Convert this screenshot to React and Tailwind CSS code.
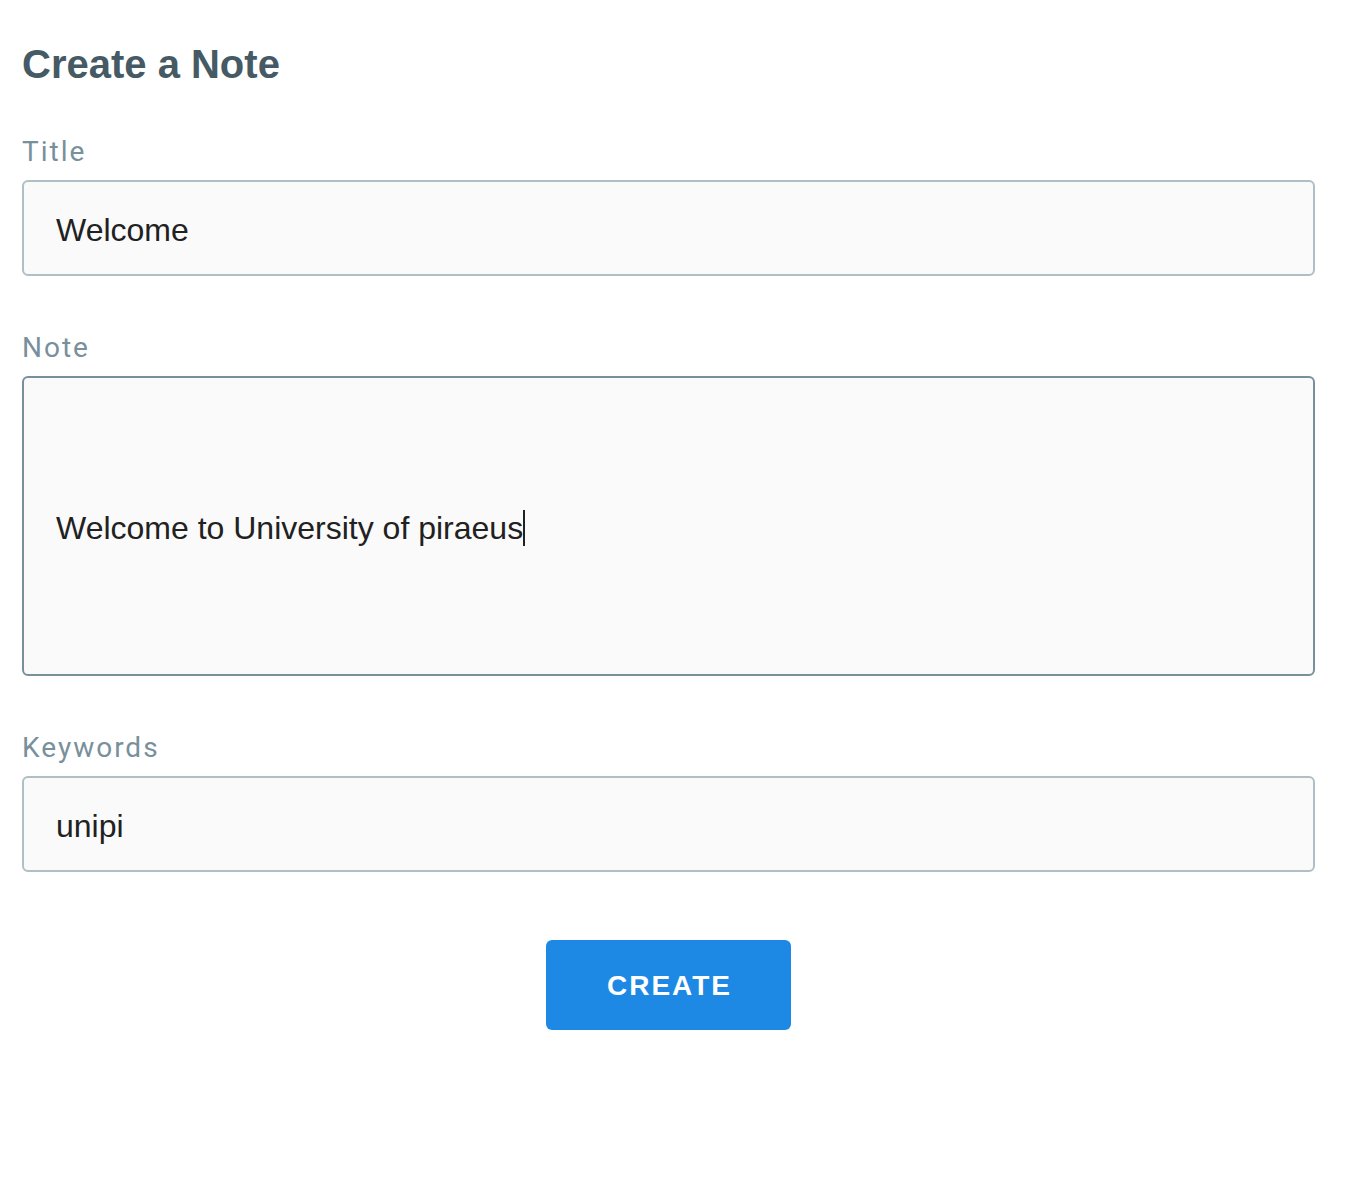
import React from 'react';

const labelCls =
  "block text-[28px] leading-none tracking-[2px] text-[#78909c] font-['Roboto',sans-serif] mb-[14px]";
const fieldCls =
  "block w-full h-[96px] px-[32px] pt-[4px] rounded-[6px] border-2 border-[#b0bec5] bg-[#fafafa] text-[32px] text-[#212121] font-['Liberation_Sans',Arial,sans-serif] outline-none";

export default function App() {
  return (
    <div className="min-h-screen bg-white px-[22px] pt-[44px] font-['Liberation_Sans',Arial,sans-serif]">
      <div className="w-[1293px]">
        <h1 className="text-[40px] leading-none font-bold text-[#455a64]">Create a Note</h1>

        <form className="mt-[54px]" onSubmit={(e) => e.preventDefault()}>
          <label className={labelCls}>Title</label>
          <input className={fieldCls} value="Welcome" readOnly />

          <label className={labelCls + " mt-[58px]"}>Note</label>
          <div className="flex items-center w-full h-[300px] px-[32px] pt-[4px] rounded-[6px] border-2 border-[#78909c] bg-[#fafafa] text-[32px] text-[#212121]">
            <span>Welcome to University of piraeus</span>
            <span className="inline-block w-[2px] h-[36px] bg-[#212121]" />
          </div>

          <label className={labelCls + " mt-[58px]"}>Keywords</label>
          <input className={fieldCls} value="unipi" readOnly />

          <div className="flex justify-center mt-[68px]">
            <button
              type="submit"
              className="w-[245px] h-[90px] rounded-[6px] bg-[#1e88e5] text-white text-[28px] font-bold tracking-[2px] uppercase pl-[2px] pt-[2px]"
            >
              Create
            </button>
          </div>
        </form>
      </div>
    </div>
  );
}
